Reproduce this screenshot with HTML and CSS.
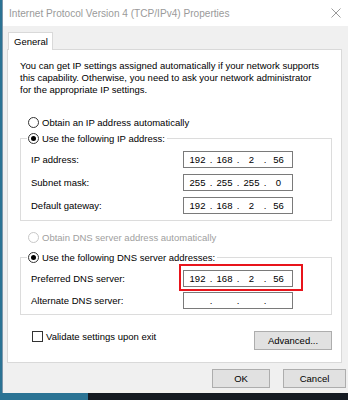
FILE: index.html
```html
<!DOCTYPE html>
<html>
<head>
<meta charset="utf-8">
<link rel="stylesheet" href="styles.css">
</head>
<body>
<div class="window">
  <div class="titlebar">
    <span class="title">Internet Protocol Version 4 (TCP/IPv4) Properties</span>
    <svg class="close" width="10" height="10" viewBox="0 0 10 10"><path d="M0.5 0.5 L9.5 9.5 M9.5 0.5 L0.5 9.5" stroke="#9a9a9a" stroke-width="1" fill="none"/></svg>
  </div>
  <div class="main">
    <div class="tab">General</div>
    <div class="panel">
      <p class="intro">You can get IP settings assigned automatically if your network supports<br>this capability. Otherwise, you need to ask your network administrator<br>for the appropriate IP settings.</p>
      <div class="opt first"><span class="radio"></span><span>Obtain an IP address automatically</span></div>
      <fieldset class="group g1">
        <legend><span class="opt"><span class="radio on"></span><span>Use the following IP address:</span></span></legend>
        <div class="row"><span class="lbl">IP address:</span><div class="ip"><span class="seg">192</span><span class="dot">.</span><span class="seg">168</span><span class="dot">.</span><span class="seg">2</span><span class="dot">.</span><span class="seg">56</span></div></div>
        <div class="row"><span class="lbl">Subnet mask:</span><div class="ip"><span class="seg">255</span><span class="dot">.</span><span class="seg">255</span><span class="dot">.</span><span class="seg">255</span><span class="dot">.</span><span class="seg">0</span></div></div>
        <div class="row"><span class="lbl">Default gateway:</span><div class="ip"><span class="seg">192</span><span class="dot">.</span><span class="seg">168</span><span class="dot">.</span><span class="seg">2</span><span class="dot">.</span><span class="seg">56</span></div></div>
      </fieldset>
      <div class="opt disabled dnsauto"><span class="radio"></span><span>Obtain DNS server address automatically</span></div>
      <fieldset class="group g2">
        <legend><span class="opt"><span class="radio on"></span><span>Use the following DNS server addresses:</span></span></legend>
        <div class="row"><span class="lbl">Preferred DNS server:</span><div class="ip marked"><span class="seg">192</span><span class="dot">.</span><span class="seg">168</span><span class="dot">.</span><span class="seg">2</span><span class="dot">.</span><span class="seg">56</span><span class="mark"></span></div></div>
        <div class="row r2"><span class="lbl">Alternate DNS server:</span><div class="ip"><span class="seg"></span><span class="dot">.</span><span class="seg"></span><span class="dot">.</span><span class="seg"></span><span class="dot">.</span><span class="seg"></span></div></div>
      </fieldset>
      <div class="bottom">
        <div class="check"><span class="box"></span><span>Validate settings upon exit</span></div>
        <button class="btn adv">Advanced...</button>
      </div>
    </div>
    <div class="footer">
      <button class="btn ok">OK</button>
      <button class="btn cancel">Cancel</button>
    </div>
  </div>
</div>
</body>
</html>
```
FILE: styles.css
```css
* { box-sizing: border-box; }
html, body { margin: 0; padding: 0; }
body {
  width: 348px;
  height: 400px;
  overflow: hidden;
  background: linear-gradient(to right, #2b7394 0, #2b7394 88px, #141a22 88px);
  font-family: "Liberation Sans", Arial, sans-serif;
  font-size: 9.5px;
  color: #000;
}
.window {
  margin-left: 2px;
  width: 346px;
  height: 393px;
  background: #f0f0f0;
  border-left: 1px solid #7d97ab;
}
.titlebar {
  height: 26px;
  background: #fff;
  display: flex;
  align-items: center;
  justify-content: space-between;
  padding: 0 7px 0 6px;
}
.title { color: #9a9a9a; font-size: 10.1px; }
.close { display: block; }
.main { padding: 6px 0 0 4px; }
.tab {
  position: relative;
  margin-left: 1px;
  margin-bottom: -1px;
  width: 45px;
  height: 18px;
  background: #fff;
  border: 1px solid #d9d9d9;
  border-bottom: none;
  padding-left: 5px;
  line-height: 17px;
}
.panel {
  width: 335px;
  height: 314px;
  background: #fff;
  border: 1px solid #d9d9d9;
  padding: 10px 0 0 12px;
}
.intro { margin: 0; line-height: 12px; }
.opt { display: flex; align-items: center; height: 14px; gap: 3px; }
.opt.first { margin: 19px 0 0 8px; }
.radio {
  width: 11px;
  height: 11px;
  border: 1px solid #333;
  border-radius: 50%;
  background: #fff;
  display: flex;
  align-items: center;
  justify-content: center;
  flex: none;
}
.radio.on::after {
  content: "";
  width: 5px;
  height: 5px;
  border-radius: 50%;
  background: #000;
}
.opt.disabled { color: #a0a0a0; }
.opt.disabled .radio { border-color: #c8c8c8; }
.opt.dnsauto { margin: 9px 0 0 8px; }
.group {
  width: 312px;
  min-width: 0;
  margin: 2px 0 0 0;
  padding: 0 0 6px 0;
  border: 1px solid #dcdcdc;
}
.group legend { margin-left: 6px; padding: 0 2px 0 1px; }
.g2 { margin-top: 6px; padding-bottom: 5px; }
.row { display: flex; align-items: center; padding-left: 10px; margin-top: 6px; }
.g2 .row.r2 { margin-top: 5px; }
.lbl { width: 152px; flex: none; }
.ip {
  position: relative;
  width: 110px;
  height: 17px;
  border: 1px solid #7a7a7a;
  background: #fff;
  display: flex;
  align-items: center;
}
.seg { flex: 1; text-align: center; }
.dot { width: 0; display: flex; justify-content: center; }
.mark {
  position: absolute;
  left: -5px;
  top: -7px;
  width: 124px;
  height: 27px;
  border: 2px solid #e8141b;
}
.bottom { display: flex; align-items: flex-start; width: 312px; margin-top: 15px; }
.check { display: flex; align-items: center; gap: 3px; height: 12px; margin-left: 12px; }
.box { width: 11px; height: 11px; border: 1px solid #333; background: #fff; flex: none; }
.btn {
  font: inherit;
  color: #000;
  background: #e1e1e1;
  border: 1px solid #adadad;
  height: 19px;
  padding: 0;
  margin: 0;
}
.adv { margin: 1px 0 0 auto; width: 78px; }
.footer { display: flex; gap: 13px; padding-left: 205px; margin-top: 6px; }
.ok { width: 58px; }
.cancel { width: 63px; }
```
